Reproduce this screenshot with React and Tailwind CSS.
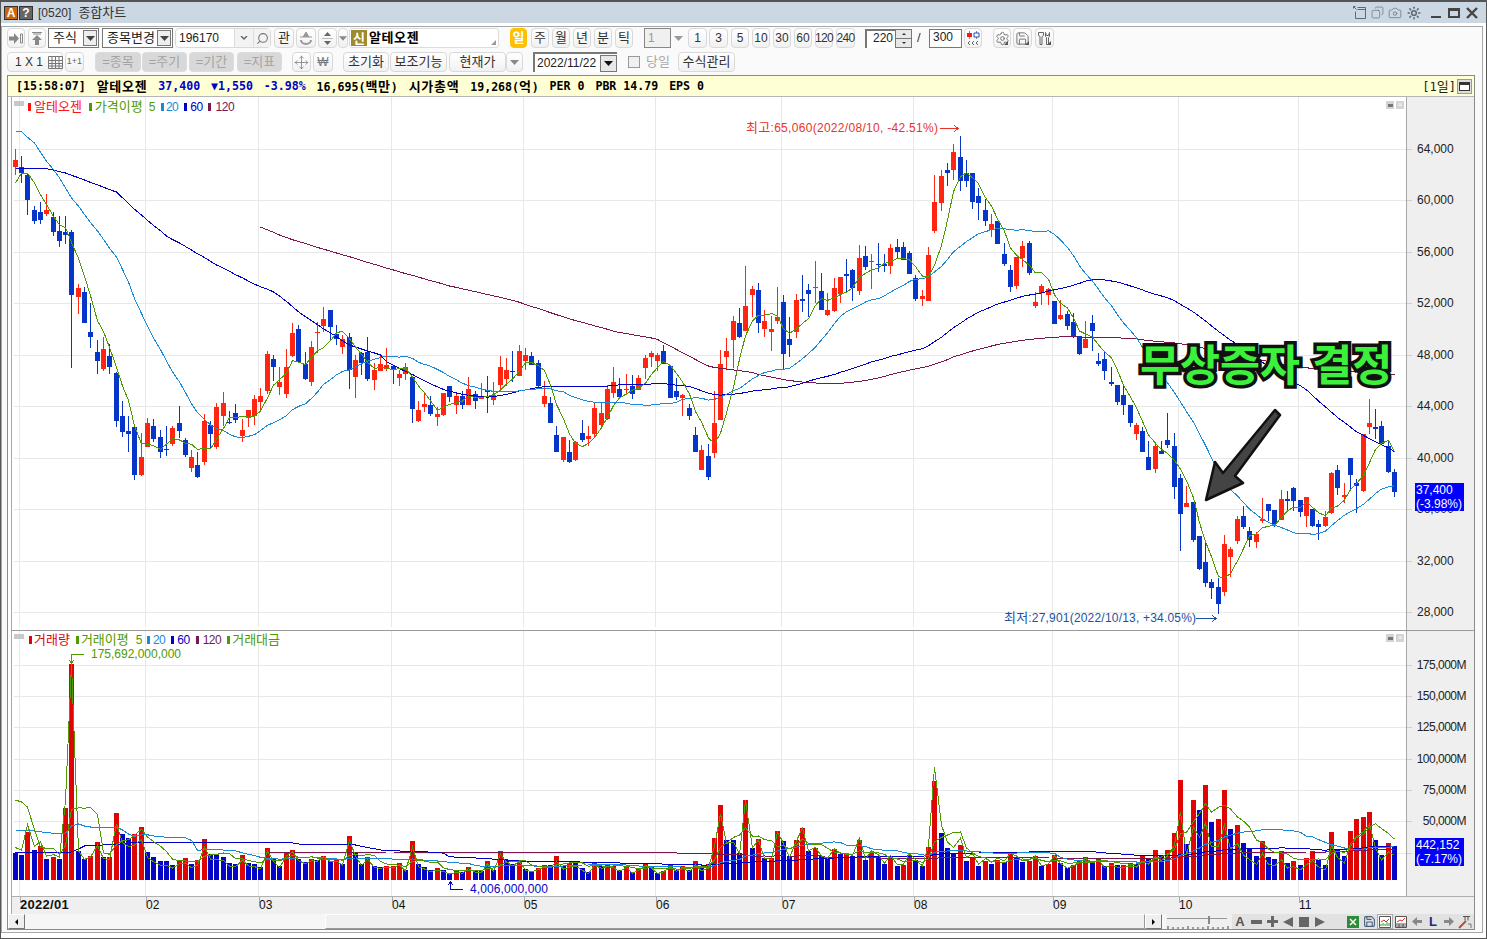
import { Camera, Copy, Save, Search, Settings, Sun, Move } from "lucide-react";

// candles read off the chart: color + high,top,bottom,low in crop px (base + v / 3 = page y)
const CANDLE_BLOCKS = [
  [120, "r87,120,140,165 b108,141,158,189 b160,165,240,285 b258,270,302,312 b246,276,300,312 r222,270,282,288 b277,291,336,348 b288,333,363,381 b288,336,345,372 b330,336,525,744 r492,504,531,582 b501,516,609,609 b549,636,651,684 b660,696,723,762 r651,687,747,753 b672,708,741,762 b755,759,903,921 b843,888,936,951 b888,933,942,996 b921,921,1065,1080 r939,1011,1065,1068 r894,909,981,981 b897,918,957,966 b930,951,996,1014 b918,987,990,1008 r918,924,972,978 b858,909,933,954 b954,960,1005,1011 r990,1011,1044,1056 b996,1035,1071,1074 r882,903,1026,1035 b903,915,942,987 r849,861,981,987 r816,849,888,918 b873,906,909,912 b852,879,900,909 r897,930,948,966 r870,870,894,921 r826,837,888,915 r804,828,846,876 r693,702,813,822 b705,717,741,783 r741,786,801,825 r687,741,822,834 r609,639,709,711 b615,627,726,729 b696,732,777,781 r663,681,786,798 r606,636,638,699 r561,597,618,636 b570,570,621,660 b615,642,657,675 r645,657,681,702 b639,651,750,807"],
  [300, "r165,180,231,294 b155,160,190,225 b111,155,237,243 r190,210,240,270 r162,192,213,213 r144,195,207,213 b195,198,210,252 r210,222,234,258 r189,201,222,240 b231,231,327,369 r303,330,363,366 r276,312,321,336 b288,315,342,348 r321,342,351,378 r279,279,345,348 b258,258,291,306 r282,288,315,342 b273,288,315,327 r231,267,315,315 b273,282,303,327 r249,288,297,297 b228,270,276,339 r246,285,300,315 r168,201,255,267 r174,210,237,258 b153,213,216,246 r135,153,228,228 r144,165,183,210 b156,168,195,195 b180,189,258,261 r243,288,312,321 b291,309,369,369 b378,405,456,456 r411,411,480,486 b420,456,486,489 r423,426,480,483 b360,399,420,426 r378,408,417,438 r309,324,402,411 r309,339,375,387 r255,267,357,360 r201,246,279,294 b234,267,291,291 r222,267,270,282 b225,258,282,297 r225,234,270,270 r165,174,204,237 r153,159,171,201 r159,165,183,213 b135,153,192,192 b198,198,294,294 b234,273,291,300 r282,285,294,348 b312,324,348,360 b381,405,456,456 r435,450,510,510 b432,468,531,540 r273,369,459,474"],
  [120, "r690,732,900,900 r655,693,711,750 r588,603,660,744 b564,609,651,654 r438,558,633,633 r498,507,525,591 b489,510,609,639 r570,603,627,651 r588,627,636,693 r501,591,603,612 b525,546,702,747 b591,657,675,711 r522,540,636,654 b465,537,543,576 b492,510,522,591 r423,501,504,549 b459,513,570,570 r519,570,585,588 r474,504,573,576 r471,471,522,549 b417,462,468,516 b447,450,504,543 r375,414,513,525 b378,408,441,450 r402,423,426,507 b369,432,435,456 b402,432,438,456 r372,384,438,462 b357,381,396,414 b366,381,420,420 b393,399,462,462 b465,474,537,543 r510,528,537,558 r381,405,543,543 r165,246,333,339 r150,168,249,273 b129,150,159,198 r72,96,150,180 b48,111,183,213 b120,159,183,201 b159,159,246,267 b204,228,249,300 b237,270,303,318 r282,312,330,351 b303,303,372,372 b369,402,432,438 b435,450,501,516 r411,411,498,507 r363,378,414,441 b363,369,459,465 r516,546,558,564 r492,498,519,555 r504,507,525,555 b543,543,612,612 r540,585,597,600 b573,582,618,630 b579,606,648,654 b648,648,702,705 r603,657,684,684 b585,609,633,693 b699,723,732,738 b696,717,753,780"],
  [330, "b111,156,162,168 b165,165,216,225 b165,195,225,255 b225,225,279,291 r279,285,312,330 b291,303,366,366 b333,381,420,420 r336,348,417,429 b333,363,372,372 b249,330,345,354 b309,348,471,507 b432,444,552,663 r468,519,531,531 b516,516,630,636 b618,618,717,720 b636,696,759,771 b747,756,774,807 b744,771,822,852 r615,642,786,798 r651,657,681,741 r558,567,633,642 b528,558,591,597 b591,603,630,651 r606,612,636,654 r504,567,573,579 b522,522,543,573 b540,540,582,591 r480,507,570,570 b483,507,513,543 b471,474,513,543 b510,510,546,561 r501,501,558,591 b537,537,588,591 b570,582,591,630 r543,561,588,591 r426,429,549,552 b405,420,474,495 r459,495,501,519 b384,384,435,477 b447,459,468,549 r312,312,483,486 r207,279,291,312 b237,291,297,327 b273,288,342,345 b336,348,426,429 b417,426,486,501"],
];

const VOLUME = "b27 b25 r48 b30 r34 b21 r23 b21 r72 r216 b29 b21 r24 r38 b23 r23 r67 b46 b42 r46 r53 b28 b23 b19 b19 b15 r20 r22 b16 r20 r41 b26 b25 b23 b17 b16 r25 b17 b16 b13 r32 b21 b14 r27 r30 b21 b18 r21 b20 r24 b19 r20 b16 r44 b27 b16 r23 b14 b13 r14 r14 r17 b10 r39 b16 b13 b10 r12 b10 b7 r9 b8 r13 b9 b9 r19 b10 r29 b20 b16 r20 b11 b9 r12 r15 b15 r24 b14 r17 b18 b12 b8 r18 b14 r16 r14 b10 r14 b8 r11 r16 b13 b7 r9 r15 b10 r14 b10 r19 b12 r16 r42 r75 b40 b40 b27 r80 b32 r41 b22 r22 r49 b39 b24 r40 r52 b29 r32 b24 b22 r31 b26 r26 b24 r40 b20 r28 b24 b16 r23 b14 r15 r25 b20 b14 r33 r99 b47 b32 b27 r35 b19 r23 b14 r19 b16 r20 b18 r26 b23 b18 r19 r24 b14 r16 r25 b17 b12 r15 r19 r23 b18 r22 b14 r17 b15 r15 r17 b16 r24 b21 r30 b25 r30 r47 r100 b36 r80 b70 r95 b58 r61 r90 b51 r55 b37 b32 b24 r39 b23 b21 r29 b17 r19 b15 r22 r29 b20 b15 r48 b31 b24 r49 r61 r63 r68 b40 b25 r37 b34"
  .split(" ")
  .map((s) => ({ up: s[0] === "r", h: Number(s.slice(1)) }));

const candles = CANDLE_BLOCKS.flatMap(([base, rows]) =>
  rows.split(" ").map((s) => {
    const [high, top, bottom, low] = s.slice(1).split(",").map((v) => base + Number(v) / 3);
    const up = s[0] === "r";
    return { up, high, top, bottom, low, close: up ? top : bottom };
  })
);

const xAt = (i) => Math.floor(15.3 + 6.298 * i);
const toIdx = (x) => (x - 15.3) / 6.298;

// points before the window is full come from traced [index, value] pairs
function movingAvg(values, n, traced = []) {
  return values.map((_, i) => {
    if (i >= n - 1) {
      let sum = 0;
      for (let k = i - n + 1; k <= i; k++) sum += values[k];
      return sum / n;
    }
    for (let k = 0; k < traced.length - 1; k++) {
      const [a, va] = traced[k];
      const [b, vb] = traced[k + 1];
      if (i >= a && i <= b) return va + ((vb - va) * (i - a)) / (b - a);
    }
    return null;
  });
}

const toPoints = (vals, fn = (v) => v) =>
  vals
    .map((v, i) => (v === null ? null : `${xAt(i) + 0.5},${fn(v).toFixed(1)}`))
    .filter(Boolean)
    .join(" ");

const closes = candles.map((c) => c.close);
const priceLines = [
  { color: "#7a1650", vals: movingAvg(closes, 120, [[258, 226], [287, 238], [313, 246], [350, 257], [400, 272], [450, 286], [512, 300], [570, 319], [617, 332], [657, 339], [683, 353], [710, 367], [750, 372], [768, 377]].map(([x, y]) => [toIdx(x), y])) },
  { color: "#0000c8", vals: movingAvg(closes, 60, [[0, 168], [4.5, 168], [8, 173], [11, 180], [16, 192], [20, 215], [24, 236], [28, 250], [32, 265], [37.6, 283], [41.4, 293], [45.6, 315], [53, 345], [58, 355]]) },
  { color: "#1a8ad8", vals: movingAvg(closes, 20, [[0, 131], [1, 131.3], [3, 143], [4.5, 157], [7, 178], [9, 198], [13.5, 235], [16, 257], [18, 282]]) },
  { color: "#4f9a00", vals: movingAvg(closes, 5, [[0, 183], [1, 173], [2, 173], [3, 183]]) },
];

const volHeights = VOLUME.map((v) => v.h);
const amounts = VOLUME.map((v, i) => {
  const c = candles[i];
  return v.h * (64000 - (((c.high + c.low + c.close) / 3 - 149) / 51.44) * 4000);
});
const maxAmount = Math.max(...amounts);
const volumeLines = [
  { color: "#7a1650", vals: movingAvg(volHeights, 120, [[40, 27.5], [61, 28], [104, 28], [105, 27], [111, 26], [116, 25], [118, 23]]) },
  { color: "#0000c8", vals: movingAvg(volHeights, 60, [[0, 27], [9, 28], [11, 34], [17, 36], [20, 38], [43, 38], [45, 36], [54, 35], [58, 30]]) },
  { color: "#1a8ad8", vals: movingAvg(volHeights, 20, [[0, 50], [3, 49], [7, 46], [8, 47], [9, 54], [10, 56], [11, 54], [12, 53], [16, 53], [17, 50], [18, 46]]) },
  { color: "#4f9a00", vals: movingAvg(volHeights, 5, [[0, 80], [1, 78], [2, 73], [3, 50]]) },
  { color: "#4f9a00", vals: amounts.map((a) => (a / maxAmount) * 216) },
];

const GRID_X = [19, 145, 258, 391, 523, 655, 781, 913, 1052, 1178, 1298];
const PRICE_TICKS = ["64,000", "60,000", "56,000", "52,000", "48,000", "44,000", "40,000", "36,000", "32,000", "28,000"];
// the 25,000M label sits behind the current-volume badge, so only its grid line shows
const VOLUME_TICKS = [["175,000M", 665], ["150,000M", 696], ["125,000M", 727], ["100,000M", 759], ["75,000M", 790], ["50,000M", 821], ["", 853]];
const MONTHS = [["02", 146], ["03", 259], ["04", 392], ["05", 524], ["06", 656], ["07", 782], ["08", 914], ["09", 1053], ["10", 1179], ["11", 1299]];

function Btn({ className = "", children }) {
  return (
    <div className={`flex h-[20px] shrink-0 items-center justify-center rounded-[4px] border border-[#d9d9d9] bg-gradient-to-b from-white to-[#f1f1f1] text-[#333] ${className}`}>
      {children}
    </div>
  );
}

function MenuBtn({ className = "", children }) {
  return (
    <Btn className={`relative text-[#666] ${className}`}>
      {children}
      <span className="absolute bottom-[2px] right-[2px] h-0 w-0 border-b-[4px] border-l-[4px] border-b-[#555] border-l-transparent" />
    </Btn>
  );
}

function Caret({ color = "#444" }) {
  return (
    <svg width="9" height="5" viewBox="0 0 9 5">
      <path d="M0 0h9L4.5 5z" fill={color} />
    </svg>
  );
}

function Select({ className = "", label }) {
  return (
    <div className={`flex h-[20px] shrink-0 items-center border border-[#777] bg-white pl-[4px] pr-[1px] text-[13px] text-[#222] ${className}`}>
      <span className="flex-1 truncate">{label}</span>
      <span className="flex h-[16px] w-[14px] items-center justify-center border border-[#777] bg-[#eee]">
        <Caret />
      </span>
    </div>
  );
}

function Candles() {
  return candles.map((c, i) => {
    const x = xAt(i);
    const fill = c.up ? "#ff2510" : "#0636c8";
    return (
      <g key={i} fill={fill}>
        <rect x={x} y={Math.round(c.high)} width="1" height={Math.max(1, Math.round(c.low - c.high))} />
        <rect x={x - 2} y={Math.round(c.top)} width="5" height={Math.max(1, Math.round(c.bottom - c.top))} />
      </g>
    );
  });
}

function Legend({ items, className = "" }) {
  return (
    <div className={`absolute flex h-[14px] items-center whitespace-nowrap ${className}`}>
      {items.map((it, i) =>
        it.bar ? (
          <span key={i} className={`h-[8px] w-[3px] ${it.bar} ${it.cls}`} />
        ) : (
          <span key={i} className={`${it.ko ? "text-[13px]" : "text-[12px] tracking-[-0.5px]"} ${it.cls}`}>{it.text}</span>
        )
      )}
    </div>
  );
}

function PanelButtons({ className = "" }) {
  return (
    <div className={`absolute flex gap-[2px] ${className}`}>
      <span className="flex h-[8px] w-[8px] items-center justify-center bg-[#d4d4d4]"><span className="h-[3px] w-[5px] bg-[#777]" /></span>
      <span className="flex h-[8px] w-[8px] items-center justify-center bg-[#d4d4d4] text-[8px] leading-none text-white">×</span>
    </div>
  );
}

function TitleBar() {
  return (
    <div className="flex h-[21px] shrink-0 items-center bg-[#cbd7e2] pl-[3px] pr-[8px]">
      <span className="flex h-[14px] w-[14px] items-center justify-center border border-[#333] bg-[#c8660c] text-[12px] font-bold leading-none text-white">A</span>
      <span className="ml-[1px] flex h-[14px] w-[14px] items-center justify-center border border-[#333] bg-[#666] text-[12px] font-bold leading-none text-white">?</span>
      <span className="ml-[5px] text-[12px] text-[#333]">[0520]</span>
      <span className="ml-[7px] text-[13px] text-[#333]">종합차트</span>
      <div className="ml-auto flex items-center text-[#5d6a75]">
        <svg width="13" height="13" viewBox="0 0 13 13" fill="none" stroke="currentColor">
          <path d="M4.500 1.500h8v11h-10V5.500M4.500 3.500h8" />
          <path d="M.5 .5l3 3M.5 .5h2M.5 .5v2" />
        </svg>
        <Copy size={13} strokeWidth={1.2} className="ml-[5px] -scale-x-100" />
        <Camera size={14} strokeWidth={1.2} className="ml-[4px]" />
        <Sun size={14} strokeWidth={2.6} className="ml-[5px]" />
        <span className="ml-[10px] mt-[8px] h-[2px] w-[10px] bg-[#444]" />
        <span className="ml-[7px] h-[10px] w-[12px] border-2 border-t-[3px] border-[#444]" />
        <svg width="12" height="12" viewBox="0 0 12 12" className="ml-[6px]">
          <path d="M1 1l10 10M11 1L1 11" stroke="#444" strokeWidth="2.4" />
        </svg>
      </div>
    </div>
  );
}

function ToolbarRowOne() {
  return (
    <div className="flex h-[20px] items-center">
      <Btn className="w-[18px]">
        <svg width="14" height="11" viewBox="0 0 14 11"><path d="M0 3.500h5V0l5 5.500-5 5.500V7.500H0z" fill="#888" /><path d="M11.500 1h2v9h-2z" fill="none" stroke="#888" /></svg>
      </Btn>
      <Btn className="ml-[3px] w-[18px]">
        <svg width="12" height="13" viewBox="0 0 12 13"><path d="M1 .5h10M2 2h8" stroke="#888" /><path d="M6 3l5 5H8v5H4V8H1z" fill="#888" /></svg>
      </Btn>
      <Select className="ml-[2px] w-[51px]" label="주식" />
      <Select className="ml-[3px] w-[71px]" label="종목변경" />
      <div className="ml-[2px] flex h-[20px] w-[96px] shrink-0 items-center rounded-[4px] border border-[#d9d9d9] bg-white text-[12px] text-[#222]">
        <span className="w-[58px] pl-[3px]">196170</span>
        <span className="flex h-full w-[19px] items-center justify-center border-l border-[#ddd] bg-[#f3f3f3]">
          <svg width="8" height="5" viewBox="0 0 8 5"><path d="M1 0l3 3 3-3" fill="none" stroke="#666" strokeWidth="1.5" /></svg>
        </span>
        <span className="flex h-full flex-1 items-center justify-center border-l border-[#ddd] bg-[#f3f3f3]">
          <Search size={13} className="-scale-x-100 text-[#777]" />
        </span>
      </div>
      <Btn className="ml-[3px] w-[20px] text-[13px]">관</Btn>
      <Btn className="ml-[2px] w-[20px]">
        <svg width="14" height="14" viewBox="0 0 14 14"><path d="M1 6h12M4 6l3-5 3 5" fill="#999" stroke="#999" /><path d="M2 9a5 4 0 0 0 10 0" fill="none" stroke="#999" strokeWidth="2" /></svg>
      </Btn>
      <Btn className="ml-[2px] w-[19px]">
        <svg width="11" height="15" viewBox="0 0 11 15"><path d="M5.500 1l3.500 4H2zM5.500 14l3.500-4H2z" fill="#666" /><path d="M0 7.500h11" stroke="#bbb" /></svg>
      </Btn>
      <Btn className="ml-[1px] w-[10px]"><Caret color="#888" /></Btn>
      <div className="relative ml-[1px] flex h-[20px] w-[150px] shrink-0 items-center rounded-[3px] border border-[#ddd] bg-white pl-[1px]">
        <span className="flex h-[16px] w-[16px] items-center justify-center bg-[#9e8b2f] text-[13px] font-bold leading-none text-white">신</span>
        <span className="ml-[2px] text-[13px] font-bold tracking-[0.6px] text-black">알테오젠</span>
        <svg width="5" height="5" viewBox="0 0 5 5" className="absolute bottom-[2px] right-[2px]"><path d="M5 0v5H0z" fill="#999" /></svg>
      </div>
      <Btn className="ml-[11px] w-[17px] border-[#ffc000] bg-none bg-[#ffc000] text-[13px] font-bold !text-white">일</Btn>
      <Btn className="ml-[4px] w-[18px] text-[13px]">주</Btn>
      <Btn className="ml-[3px] w-[18px] text-[13px]">월</Btn>
      <Btn className="ml-[3px] w-[18px] text-[13px]">년</Btn>
      <Btn className="ml-[3px] w-[18px] text-[13px]">분</Btn>
      <Btn className="ml-[3px] w-[18px] text-[13px]">틱</Btn>
      <div className="ml-[11px] flex h-[20px] w-[41px] shrink-0 items-center text-[12px] text-[#999]">
        <span className="flex h-full w-[27px] items-center border border-[#888] bg-[#f0f0f0] pl-[3px]">1</span>
        <span className="flex h-full flex-1 items-center justify-center"><Caret color="#999" /></span>
      </div>
      <Btn className="ml-[3px] w-[19px] text-[12px]">1</Btn>
      <Btn className="ml-[2px] w-[19px] text-[12px]">3</Btn>
      <Btn className="ml-[3px] w-[18px] text-[12px]">5</Btn>
      <Btn className="ml-[3px] w-[18px] text-[12px]">10</Btn>
      <Btn className="ml-[3px] w-[18px] text-[12px]">30</Btn>
      <Btn className="ml-[3px] w-[18px] text-[12px]">60</Btn>
      <Btn className="ml-[3px] w-[18px] text-[12px] tracking-[-0.6px]">120</Btn>
      <Btn className="ml-[3px] w-[19px] text-[12px] tracking-[-0.6px]">240</Btn>
      <div className="ml-[10px] flex h-[19px] w-[47px] shrink-0 text-[12px] text-[#222]">
        <span className="w-[30px] border-l-2 border-t-2 border-[#777] bg-white pr-[2px] text-right leading-[14px]">220</span>
        <span className="flex flex-1 flex-col border border-[#777] bg-[#e8e8e8]">
          <span className="flex flex-1 items-center justify-center border-b border-[#777]"><span className="h-0 w-0 border-x-[2px] border-b-[2px] border-x-transparent border-b-[#333]" /></span>
          <span className="flex flex-1 items-center justify-center"><span className="h-0 w-0 border-x-[2px] border-t-[2px] border-x-transparent border-t-[#333]" /></span>
        </span>
      </div>
      <span className="ml-[5px] w-[8px] shrink-0 text-[13px] text-[#333]">/</span>
      <span className="ml-[4px] h-[19px] w-[33px] shrink-0 border border-[#777] bg-white pl-[3px] text-[12px] leading-[15px] text-[#222]">300</span>
      <Btn className="ml-[2px] w-[18px]">
        <svg width="14" height="14" viewBox="0 0 14 14"><path d="M3.500 0v8M10.500 0v8" stroke="#888" /><path d="M1 2h5v4H1z" fill="#f02010" /><path d="M8 2h5v4H8z" fill="#fff" stroke="#2050d0" /><path d="M4 10l-2 2 2 2M8 10l-2 2 2 2M12 10l-2 2 2 2" fill="none" stroke="#666" /></svg>
      </Btn>
      <MenuBtn className="ml-[11px] w-[18px]"><Settings size={15} strokeWidth={1.4} /></MenuBtn>
      <MenuBtn className="ml-[2px] w-[19px]"><Save size={15} strokeWidth={1.4} /></MenuBtn>
      <MenuBtn className="ml-[3px] w-[19px]">
        <svg width="15" height="15" viewBox="0 0 15 15" fill="none" stroke="currentColor">
          <path d="M1.500 1.500h5v3l-1.500 1v8H3v-8l-1.500-1zM8.500 1.500l1 3h2l1-3v4l-1 1v7h-2v-7l-1-1z" />
        </svg>
      </MenuBtn>
    </div>
  );
}

function ToolbarRowTwo() {
  const off = "border-[#dcdcdc] bg-none bg-[#d8d8d8] text-[13px] !text-[#a4a4a4]";
  return (
    <div className="mt-[4px] flex h-[20px] items-center">
      <Btn className="w-[56px] justify-start pl-[7px] text-[12px]">
        <span className="w-[33px] shrink-0 whitespace-nowrap">1 X 1</span>
        <svg width="15" height="13" viewBox="0 0 15 13" className="shrink-0"><path d="M.5.5h14v12H.5zM.5 4.500h14M.5 7.500h14M.5 10h14M4 1v12M7.500 1v12M11 1v12" fill="none" stroke="#777" /></svg>
      </Btn>
      <Btn className="ml-[2px] w-[19px] text-[9px] text-[#666]">1+1</Btn>
      <Btn className={`ml-[11px] w-[46px] ${off}`}>=종목</Btn>
      <Btn className={`ml-[1px] w-[45px] ${off}`}>=주기</Btn>
      <Btn className={`ml-[2px] w-[45px] ${off}`}>=기간</Btn>
      <Btn className={`ml-[3px] w-[45px] ${off}`}>=지표</Btn>
      <Btn className="ml-[10px] w-[19px] text-[#777]"><Move size={15} strokeWidth={1.2} /></Btn>
      <Btn className="ml-[2px] w-[20px] text-[12px] text-[#777]">₩</Btn>
      <Btn className="ml-[10px] w-[46px] text-[13px]">초기화</Btn>
      <Btn className="ml-[1px] w-[57px] text-[13px]">보조기능</Btn>
      <Btn className="ml-[2px] w-[57px] text-[13px]">현재가</Btn>
      <Btn className="w-[17px]"><Caret color="#888" /></Btn>
      <div className="ml-[10px] flex h-[20px] w-[84px] shrink-0 items-center border-l-2 border-t-2 border-[#777] bg-white pl-[2px] text-[12px] text-[#222]">
        <span className="flex-1">2022/11/22</span>
        <span className="flex h-[17px] w-[17px] items-center justify-center border border-[#777] bg-[#e8e8e8]"><Caret color="#111" /></span>
      </div>
      <span className="ml-[11px] h-[12px] w-[12px] shrink-0 border border-[#999] bg-[#f0f0f0]" />
      <span className="ml-[6px] w-[23px] shrink-0 whitespace-nowrap text-[13px] text-[#aaa]">당일</span>
      <Btn className="ml-[9px] w-[57px] text-[13px]">수식관리</Btn>
    </div>
  );
}

function InfoBar() {
  const mono = "[font-family:'DejaVu_Sans_Mono','Noto_Sans_CJK_KR',monospace]";
  const ko = "text-[13px] tracking-[0.7px]";
  return (
    <div className={`flex h-[21px] shrink-0 items-center justify-between border-b border-[#b5b5b5] bg-[#ffffd6] pl-[8px] pt-[1px] text-[11.6px] font-bold text-black ${mono}`}>
      <div className="flex items-center gap-[10.9px] whitespace-nowrap">
        <span>[15:58:07]</span>
        <span className={ko}>알테오젠</span>
        <span className="text-[#0000c8]">37,400</span>
        <span className="text-[#0000c8]">▼1,550</span>
        <span className="text-[#0000c8]">-3.98%</span>
        <span>16,695(<span className={ko}>백만</span>)</span>
        <span className={ko}>시가총액</span>
        <span>19,268(<span className={ko}>억</span>)</span>
        <span>PER 0</span>
        <span>PBR 14.79</span>
        <span>EPS 0</span>
      </div>
      <div className="flex items-center pr-[2px] font-normal text-[#222]">
        <span className="text-[12px]">[1<span className="text-[13px]">일</span>]</span>
        <span className="ml-[1px] flex h-[15px] w-[15px] items-center justify-center border border-[#999] bg-[#ddd]"><span className="h-[9px] w-[11px] border border-t-[3px] border-[#333] bg-white" /></span>
      </div>
    </div>
  );
}

function PricePanel() {
  return (
    <div className="flex h-[534px] shrink-0 border-b border-[#9a9a9a]">
      <div className="relative w-[1394px] shrink-0 bg-white">
        <svg width="1394" height="533" viewBox="12 97 1394 533" shapeRendering="crispEdges" className="block">
          {GRID_X.map((x) => <rect key={x} x={x} y="97" width="1" height="530" fill="#e8e8e8" />)}
          {PRICE_TICKS.map((t, i) => <rect key={t} x="14" y={Math.round(149 + i * 51.44)} width="1392" height="1" fill="#e8e8e8" />)}
          <Candles />
          {priceLines.map((l, i) => <polyline key={i} points={toPoints(l.vals)} fill="none" stroke={l.color} strokeWidth="1" />)}
          <text x="746" y="132" fontSize="12" fill="#e8342a" textLength="192">
            <tspan fontSize="13">최고</tspan>:65,060(2022/08/10, -42.51%)
          </text>
          <path d="M940 128.500h18M954 125l4 3.500-4 3.500" fill="none" stroke="#e8342a" />
          <text x="1004" y="622" fontSize="12" fill="#1a52a8" textLength="192">
            <tspan fontSize="13">최저</tspan>:27,901(2022/10/13, +34.05%)
          </text>
          <path d="M1196 618.500h20M1212 615l4 3.500-4 3.500" fill="none" stroke="#1a52a8" />
          <polygon points="1275,410 1280,415 1235,476 1243,483 1206,500 1215,462 1223,473" fill="#444" stroke="#111" strokeWidth="2.5" strokeLinejoin="round" shapeRendering="auto" />
        </svg>
        <span className="absolute left-[2px] top-[4px] h-[5px] w-[10px] bg-[#c8c8c8]" />
        <Legend
          className="left-[16px] top-[3px]"
          items={[
            { bar: "bg-[#ff1010]" },
            { text: "알테오젠", ko: true, cls: "ml-[3px] text-[#ff1010]" },
            { bar: "bg-[#4f9a00]", cls: "ml-[7px]" },
            { text: "가격이평", ko: true, cls: "ml-[3px] text-[#4f9a00]" },
            { text: "5", cls: "ml-[6px] text-[#4f9a00]" },
            { bar: "bg-[#1a8ad8]", cls: "ml-[6px]" },
            { text: "20", cls: "ml-[2px] text-[#1a8ad8]" },
            { bar: "bg-[#0000c8]", cls: "ml-[6px]" },
            { text: "60", cls: "ml-[3px] text-[#0000c8]" },
            { bar: "bg-[#7a1650]", cls: "ml-[5px]" },
            { text: "120", cls: "ml-[5px] text-[#7a1650]" },
          ]}
        />
        <PanelButtons className="left-[1374px] top-[4px]" />
        <div className="absolute left-[1128px] top-[243px] whitespace-nowrap text-[43.5px] font-bold leading-[52px] text-[#3cf03c] [-webkit-text-stroke:7px_#111] [paint-order:stroke_fill]">
          무상증자 결정
        </div>
      </div>
      <div className="relative flex-1 border-l border-[#a8a8a8] bg-[#efefef] text-[12px] text-[#222]">
        {PRICE_TICKS.map((t, i) => (
          <div key={t}>
            <span className="absolute left-0 h-px w-[5px] bg-[#d0d0d0]" style={{ top: Math.round(52 + i * 51.44) }} />
            <span className="absolute left-[10px] leading-[14px]" style={{ top: Math.round(45 + i * 51.44) }}>{t}</span>
          </div>
        ))}
        <div className="absolute left-[8px] top-[386px] w-[49px] bg-[#0000ff] pl-[1px] text-[12px] leading-[14px] text-white">
          37,400<br />(-3.98%)
        </div>
      </div>
    </div>
  );
}

function VolumePanel() {
  return (
    <div className="flex h-[266px] shrink-0 border-b border-[#b0b0b0]">
      <div className="relative w-[1394px] shrink-0 bg-white">
        <svg width="1394" height="265" viewBox="12 631 1394 265" shapeRendering="crispEdges" className="block">
          {GRID_X.map((x) => <rect key={x} x={x} y="631" width="1" height="265" fill="#e8e8e8" />)}
          {VOLUME_TICKS.map(([, y]) => <rect key={y} x="14" y={y} width="1392" height="1" fill="#e8e8e8" />)}
          {VOLUME.map((v, i) => <rect key={i} x={xAt(i) - 2} y={880 - v.h} width="5" height={v.h} fill={v.up ? "#e00505" : "#0505c8"} />)}
          {volumeLines.map((l, i) => <polyline key={i} points={toPoints(l.vals, (v) => 880 - v)} fill="none" stroke={l.color} strokeWidth="1" />)}
          <text x="91" y="658" fontSize="12" fill="#4f9a00" textLength="90">175,692,000,000</text>
          <path d="M71.500 664v-10h12M69 660l2.500 3 2.500-3" fill="none" stroke="#4f9a00" />
          <text x="470" y="893" fontSize="12" fill="#0505c8" textLength="78">4,006,000,000</text>
          <path d="M450.500 882v7h12M448 885l2.500-3 2.500 3" fill="none" stroke="#0505c8" />
        </svg>
        <span className="absolute left-[2px] top-[3px] h-[5px] w-[10px] bg-[#c8c8c8]" />
        <Legend
          className="left-[17px] top-[2px]"
          items={[
            { bar: "bg-[#e00505]" },
            { text: "거래량", ko: true, cls: "ml-[2px] text-[#e00505]" },
            { bar: "bg-[#4f9a00]", cls: "ml-[6px]" },
            { text: "거래이평", ko: true, cls: "ml-[2px] text-[#4f9a00]" },
            { text: "5", cls: "ml-[7px] text-[#4f9a00]" },
            { bar: "bg-[#1a8ad8]", cls: "ml-[5px]" },
            { text: "20", cls: "ml-[3px] text-[#1a8ad8]" },
            { bar: "bg-[#0000c8]", cls: "ml-[6px]" },
            { text: "60", cls: "ml-[3px] text-[#0000c8]" },
            { bar: "bg-[#7a1650]", cls: "ml-[6px]" },
            { text: "120", cls: "ml-[4px] text-[#7a1650]" },
            { bar: "bg-[#4f9a00]", cls: "ml-[6px]" },
            { text: "거래대금", ko: true, cls: "ml-[2px] text-[#4f9a00]" },
          ]}
        />
        <PanelButtons className="left-[1374px] top-[3px]" />
      </div>
      <div className="relative flex-1 border-l border-[#a8a8a8] bg-[#efefef] text-[12px] tracking-[-0.5px] text-[#222]">
        {VOLUME_TICKS.map(([t, y]) => (
          <div key={y}>
            <span className="absolute left-0 h-px w-[5px] bg-[#d0d0d0]" style={{ top: y - 631 }} />
            {t && <span className="absolute right-[8px] leading-[14px]" style={{ top: y - 638 }}>{t}</span>}
          </div>
        ))}
        <div className="absolute left-[8px] top-[207px] w-[49px] bg-[#0000ff] pl-[1px] text-[12px] leading-[14px] tracking-normal text-white">
          442,152<br />(-7.17%)
        </div>
      </div>
    </div>
  );
}

function XAxis() {
  return (
    <div className="relative h-[17px] shrink-0 bg-[#efefef] text-[12px] text-[#111]">
      <span className="absolute left-[8px] top-0 h-[6px] w-px bg-[#aaa]" />
      <span className="absolute left-[8px] top-[1px] text-[13px] font-bold leading-[14px] tracking-[0.3px]">2022/01</span>
      {MONTHS.map(([m, x]) => (
        <div key={m}>
          <span className="absolute top-0 h-[6px] w-px bg-[#aaa]" style={{ left: x - 12 }} />
          <span className="absolute top-[1px] leading-[14px]" style={{ left: x - 12 }}>{m}</span>
        </div>
      ))}
    </div>
  );
}

function Cell({ className = "", children }) {
  return <span className={`flex h-full w-[16px] shrink-0 items-center justify-center ${className}`}>{children}</span>;
}

function BottomBar() {
  return (
    <div className="flex h-[15px] shrink-0 items-stretch bg-[#f6f6f6] text-[#555]">
      <span className="flex w-[17px] shrink-0 items-center justify-center border border-[#777] border-l-white border-t-white bg-[#efefef]">
        <span className="h-0 w-0 border-y-[3px] border-r-[3px] border-y-transparent border-r-black" />
      </span>
      <span className="w-[300px] shrink-0" />
      <span className="w-[820px] shrink-0 border border-[#999] border-l-white border-t-white bg-[#f0f0f0]" />
      <span className="flex w-[17px] shrink-0 items-center justify-center border border-[#777] border-l-white border-t-white bg-[#efefef]">
        <span className="h-0 w-0 border-y-[3px] border-l-[3px] border-y-transparent border-l-black" />
      </span>
      <div className="ml-[4px] flex w-[66px] shrink-0 flex-col justify-center bg-[#efefef] pl-[1px]">
        <svg width="62" height="14" viewBox="0 0 62 14">
          <path d="M0 3.500h60" stroke="#999" />
          <path d="M42 1v8" stroke="#888" strokeWidth="2" />
          <path d="M1 11v3M6 12v2M11 12v2M16 12v2M21 11v3M26 12v2M31 12v2M36 12v2M41 11v3M46 12v2M51 12v2M56 12v2M61 11v3" stroke="#444" />
        </svg>
      </div>
      <div className="flex flex-1 items-center bg-[#e2e2e2]">
        <Cell className="text-[13px] font-bold leading-none text-[#555]">A</Cell>
        <Cell><span className="h-[4px] w-[11px] bg-[#666]" /></Cell>
        <Cell><svg width="11" height="11" viewBox="0 0 11 11"><path d="M4 0h3v4h4v3H7v4H4V7H0V4h4z" fill="#666" /></svg></Cell>
        <Cell><svg width="10" height="10" viewBox="0 0 10 10"><path d="M10 0v10L0 5z" fill="#666" /></svg></Cell>
        <Cell><span className="h-[10px] w-[10px] bg-[#666]" /></Cell>
        <Cell><svg width="10" height="10" viewBox="0 0 10 10"><path d="M0 0v10l10-5z" fill="#666" /></svg></Cell>
        <Cell className="ml-[17px]"><svg width="12" height="12" viewBox="0 0 12 12"><path d="M0 0h12v12H0z" fill="#2e8b3a" /><path d="M3 3l6 6M9 3L3 9" stroke="#fff" strokeWidth="1.500" /></svg></Cell>
        <Cell><Save size={13} className="text-[#44607a]" /></Cell>
        <Cell className="border border-[#aaa] bg-[#f4f4f4]">
          <svg width="12" height="12" viewBox="0 0 12 12"><path d="M.5.5h11v11H.5z" fill="#fff" stroke="#555" /><path d="M2 6l3-2 2 2 3-3" fill="none" stroke="#e03020" /><path d="M2 10V8M4 10V7M6 10V8M8 10V6M10 10V7" stroke="#2a9a2a" /></svg>
        </Cell>
        <Cell><svg width="12" height="12" viewBox="0 0 12 12"><path d="M.5.5h11v11H.5zM.5 8h11M.5 10h11M4 8v3M8 8v3" fill="#fff" stroke="#555" /><path d="M2 6l3-2 2 1 3-3" fill="none" stroke="#e03020" /></svg></Cell>
        <Cell><svg width="10" height="9" viewBox="0 0 10 9"><path d="M0 4.500L5 0v3h5v3H5v3z" fill="#888" /></svg></Cell>
        <Cell className="text-[13px] font-bold leading-none text-[#1c2a80]">L</Cell>
        <Cell><svg width="10" height="9" viewBox="0 0 10 9"><path d="M10 4.500L5 0v3H0v3h5v3z" fill="#888" /></svg></Cell>
        <Cell>
          <svg width="14" height="14" viewBox="0 0 14 14" fill="none"><path d="M1 13l7-7" stroke="#c04a3a" strokeWidth="2" /><path d="M5 1.500h7M7 1.500v4M10 1.500v4" stroke="#555" /><path d="M10 9h3v4" stroke="#777" /></svg>
        </Cell>
      </div>
    </div>
  );
}

export default function App() {
  return (
    <div className="flex h-[939px] w-[1487px] flex-col overflow-hidden border border-t-2 border-[#555] bg-white [font-family:'Liberation_Sans','Noto_Sans_CJK_KR',sans-serif]">
      <TitleBar />
      <div className="mb-[5px] mr-[3px] mt-[3px] flex flex-1 flex-col border border-[#a8a8a8] bg-[#fafafa] pl-[5px] pt-[1px]">
        <ToolbarRowOne />
        <ToolbarRowTwo />
        <div className="mt-[3px] flex w-[1468px] flex-col border border-[#8a8a8a] bg-white">
          <InfoBar />
          <div className="flex flex-col pl-[3px]">
            <div className="border-l border-[#a8a8a8]">
              <PricePanel />
              <VolumePanel />
              <XAxis />
            </div>
          </div>
          <BottomBar />
        </div>
      </div>
    </div>
  );
}
